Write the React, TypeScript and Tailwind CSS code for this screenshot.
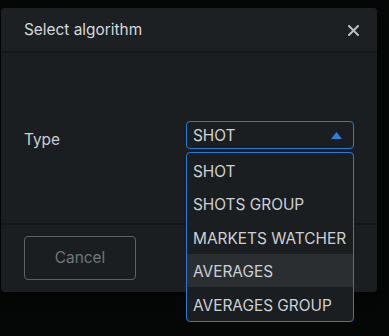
import React, { useState } from 'react';

const options = ['SHOT', 'SHOTS GROUP', 'MARKETS WATCHER', 'AVERAGES', 'AVERAGES GROUP'];

export default function App() {
  const [value, setValue] = useState('SHOT');
  const [hovered] = useState('AVERAGES');

  return (
    <div className="w-[389px] h-[336px] bg-[#050606] pt-2 pl-px font-['Inter','Liberation_Sans',sans-serif]">
      <div className="w-[376px] rounded-[4px] bg-[#1b1e20] shadow-lg">
        {/* Header */}
        <div className="h-[45px] pl-[23px] pr-[18px] pt-px flex items-center justify-between bg-[#1d2022] rounded-t-[4px] border-b-2 border-[#131517]">
          <h3 className="text-[15.4px] text-[#d5d9dc] leading-none">Select algorithm</h3>
          <button className="w-[12px] h-[12px] flex items-center justify-center">
            <svg width="11" height="11" viewBox="0 0 11 11" fill="none">
              <path d="M1 1L10 10M10 1L1 10" stroke="#b8c0c6" strokeWidth="2" strokeLinecap="round" />
            </svg>
          </button>
        </div>

        {/* Body */}
        <div className="h-[170px] px-[23px] pt-[68px] flex justify-between items-start">
          <span className="text-[15.4px] text-[#c9ced2] mt-[11px] leading-none">Type</span>
          <div className="relative w-[168px]">
            <button className="w-full h-[28px] px-[6px] pt-px flex items-center justify-between rounded-[4px] border border-[#2d78d4] bg-[#1b1e20]">
              <span className="text-[15.4px] text-[#cfd4d8] leading-none">{value}</span>
              <svg width="11" height="7" viewBox="0 0 11 7" className="mr-[5px]">
                <path d="M5.5 0L11 7H0Z" fill="#2f7fdc" />
              </svg>
            </button>
            {/* Options menu */}
            <ul className="absolute left-0 top-[31px] w-full z-10 rounded-[4px] border border-[#2d78d4] bg-[#1b1e20] overflow-hidden">
              {options.map((opt) => (
                <li
                  key={opt}
                  onClick={() => setValue(opt)}
                  className={`h-[33.6px] px-[6px] pt-[3px] flex items-center text-[15.4px] text-[#ccd1d5] leading-none ${
                    opt === hovered ? 'bg-[#2a2e31]' : ''
                  }`}
                >
                  {opt}
                </li>
              ))}
            </ul>
          </div>
        </div>

        {/* Footer */}
        <div className="h-[69px] px-[23px] pt-[11px] border-t-2 border-[#131517]">
          <button className="w-[112px] h-[44px] rounded-[4px] border border-[#5b6167] text-[15.4px] text-[#6e767c]">
            Cancel
          </button>
        </div>
      </div>
    </div>
  );
}
